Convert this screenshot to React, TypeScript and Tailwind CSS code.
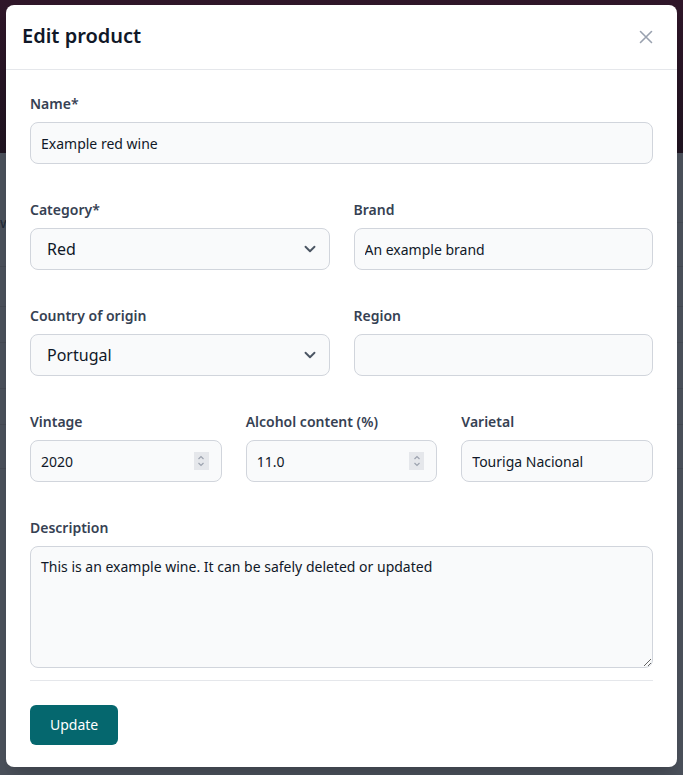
import { useState } from "react";

function Label({ children }: { children: React.ReactNode }) {
  return (
    <label className="mb-2 block text-sm leading-5 font-semibold text-gray-700">
      {children}
    </label>
  );
}

const inputClass =
  "block h-[42px] w-full rounded-lg border border-gray-300 bg-gray-50 px-2.5 text-sm text-gray-900 outline-none";

function TextField({ label, value }: { label: string; value: string }) {
  const [val, setVal] = useState(value);
  return (
    <div>
      <Label>{label}</Label>
      <input
        type="text"
        value={val}
        onChange={(e) => setVal(e.target.value)}
        className={inputClass}
      />
    </div>
  );
}

function NumberField({ label, value }: { label: string; value: string }) {
  const [val, setVal] = useState(value);
  return (
    <div>
      <Label>{label}</Label>
      <div className="relative">
        <input
          type="text"
          inputMode="decimal"
          value={val}
          onChange={(e) => setVal(e.target.value)}
          className={inputClass}
        />
        {/* spinner */}
        <div className="absolute top-1/2 right-[13px] flex h-[18px] w-[15px] -translate-y-1/2 flex-col items-center justify-center bg-gray-200">
          <svg viewBox="0 0 10 14" className="h-[14px] w-[10px]" fill="none" stroke="#9ca3af" strokeWidth="1.2">
            <path d="M2.5 5 L5 2.5 L7.5 5" />
            <path d="M2.5 9 L5 11.5 L7.5 9" />
          </svg>
        </div>
      </div>
    </div>
  );
}

function SelectField({ label, value, options }: { label: string; value: string; options: string[] }) {
  const [val, setVal] = useState(value);
  return (
    <div>
      <Label>{label}</Label>
      <div className="relative">
        <select
          value={val}
          onChange={(e) => setVal(e.target.value)}
          className="block h-[42px] w-full appearance-none rounded-lg border border-gray-300 bg-gray-50 px-4 text-base text-gray-900 outline-none"
        >
          {options.map((o) => (
            <option key={o}>{o}</option>
          ))}
        </select>
        <svg
          viewBox="0 0 24 24"
          className="pointer-events-none absolute top-1/2 right-[11px] h-[18px] w-[18px] -translate-y-1/2"
          fill="none"
          stroke="#4b5563"
          strokeWidth="2.5"
          strokeLinecap="round"
          strokeLinejoin="round"
        >
          <path d="M6 9l6 6 6-6" />
        </svg>
      </div>
    </div>
  );
}

export default function App() {
  const [desc, setDesc] = useState("This is an example wine. It can be safely deleted or updated");

  return (
    <div className="relative h-[775px] w-full overflow-hidden bg-[#4b515b]" style={{ fontFamily: '"Noto Sans", "Open Sans", sans-serif' }}>
      {/* dimmed page behind */}
      <div className="h-[153px] bg-gradient-to-b from-[#2f1629] to-[#1f1420]" />
      <div className="flex flex-col">
        <div className="h-[70px] border-b border-[#454a53] pl-0 pt-[62px] text-[15px] leading-none text-[#1f2937]">w</div>
        <div className="h-[44px] border-b border-[#454a53]" />
        <div className="h-[40px] border-b border-[#454a53]" />
        <div className="h-[36px] border-b border-[#454a53]" />
        <div className="h-[46px] border-b border-[#454a53]" />
        <div className="h-[36px] border-b border-[#454a53]" />
        <div className="h-[44px] border-b border-[#454a53]" />
      </div>

      {/* modal */}
      <div className="absolute top-[5px] left-[6px] flex h-[762px] w-[671px] flex-col rounded-lg bg-white shadow-xl">
        <div className="flex h-[65px] items-center justify-between border-b border-gray-200 px-4">
          <h2 className="-mt-[3px] text-xl font-semibold text-gray-900">Edit product</h2>
          <button className="mr-[4px] p-1 text-gray-400" aria-label="Close">
            <svg viewBox="0 0 14 14" className="h-[14px] w-[14px]" fill="none" stroke="currentColor" strokeWidth="1.6" strokeLinecap="round">
              <path d="M1.5 1.5l11 11M12.5 1.5l-11 11" />
            </svg>
          </button>
        </div>

        <form className="flex flex-col px-6 pt-6" onSubmit={(e) => e.preventDefault()}>
          <div className="flex flex-col gap-9">
            <TextField label="Name*" value="Example red wine" />
            <div className="grid grid-cols-2 gap-6">
              <SelectField label="Category*" value="Red" options={["Red", "White", "Rosé", "Sparkling"]} />
              <TextField label="Brand" value="An example brand" />
            </div>
            <div className="grid grid-cols-2 gap-6">
              <SelectField label="Country of origin" value="Portugal" options={["Portugal", "Spain", "France", "Italy"]} />
              <TextField label="Region" value="" />
            </div>
            <div className="grid grid-cols-3 gap-6">
              <NumberField label="Vintage" value="2020" />
              <NumberField label="Alcohol content (%)" value="11.0" />
              <TextField label="Varietal" value="Touriga Nacional" />
            </div>
            <div>
              <Label>Description</Label>
              <textarea
                value={desc}
                onChange={(e) => setDesc(e.target.value)}
                className="block h-[122px] w-full rounded-lg border border-gray-300 bg-gray-50 px-2.5 py-2.5 text-sm text-gray-900 outline-none"
              />
            </div>
          </div>

          <div className="mt-3 border-t border-gray-200 pt-6">
            <button type="submit" className="h-10 rounded-md bg-[#05676e] px-5 text-sm font-normal text-white">
              Update
            </button>
          </div>
        </form>
      </div>
    </div>
  );
}
